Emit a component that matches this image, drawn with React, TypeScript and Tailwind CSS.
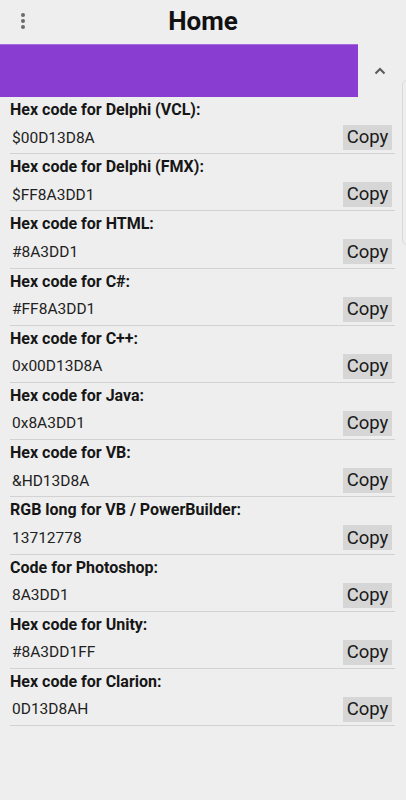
import React from "react";

const rows: [string, string][] = [
  ["Hex code for Delphi (VCL):", "$00D13D8A"],
  ["Hex code for Delphi (FMX):", "$FF8A3DD1"],
  ["Hex code for HTML:", "#8A3DD1"],
  ["Hex code for C#:", "#FF8A3DD1"],
  ["Hex code for C++:", "0x00D13D8A"],
  ["Hex code for Java:", "0x8A3DD1"],
  ["Hex code for VB:", "&HD13D8A"],
  ["RGB long for VB / PowerBuilder:", "13712778"],
  ["Code for Photoshop:", "8A3DD1"],
  ["Hex code for Unity:", "#8A3DD1FF"],
  ["Hex code for Clarion:", "0D13D8AH"],
];

export default function App() {
  return (
    <div
      className="relative w-[406px] h-[800px] overflow-hidden bg-[#eeeeee] text-[#1a1a1a]"
      style={{ fontFamily: "Roboto, 'Noto Sans', sans-serif" }}
    >
      <div className="relative h-[44px] flex items-center justify-center">
        <div className="absolute left-[21px] top-[13px] flex flex-col gap-[2px]">
          <span className="w-[4px] h-[4px] rounded-full bg-[#6b6b6b]" />
          <span className="w-[4px] h-[4px] rounded-full bg-[#6b6b6b]" />
          <span className="w-[4px] h-[4px] rounded-full bg-[#6b6b6b]" />
        </div>
        <span className="text-[26px] font-bold leading-none text-[#111] mt-[-2px]">Home</span>
      </div>
      <div className="flex">
        <div className="w-[358px] h-[53px] bg-[#8a3dd1] border-t border-[#a66de0]" />
        <div className="flex-1 flex justify-center pt-[23px] pr-[4px]">
          <svg width="12" height="8" viewBox="0 0 12 8">
            <path d="M1.5 6.5 L6 2 L10.5 6.5" fill="none" stroke="#5a5a5a" strokeWidth="2" />
          </svg>
        </div>
      </div>
      <div className="absolute left-[402px] top-[80px] w-[20px] h-[165px] border border-[#d9d9d9] rounded-[5px]" />
      <div className="ml-[10px] w-[385px]">
        {rows.map(([label, value]) => (
          <div key={label} className="pt-[3px] pb-[3.2px] border-b border-[#d2d2d2]">
            <div className="text-[16px] leading-[20px] font-bold text-[#161616]">{label}</div>
            <div className="mt-[5px] h-[25px] flex items-center justify-between pl-[2px] pr-[3px]">
              <span className="text-[15.5px] leading-[20px] text-[#222]">{value}</span>
              <span className="h-[25px] w-[49px] bg-[#d6d6d6] flex items-center justify-center text-[18.5px] leading-none text-[#1a1a1a]">
                Copy
              </span>
            </div>
          </div>
        ))}
      </div>
    </div>
  );
}
